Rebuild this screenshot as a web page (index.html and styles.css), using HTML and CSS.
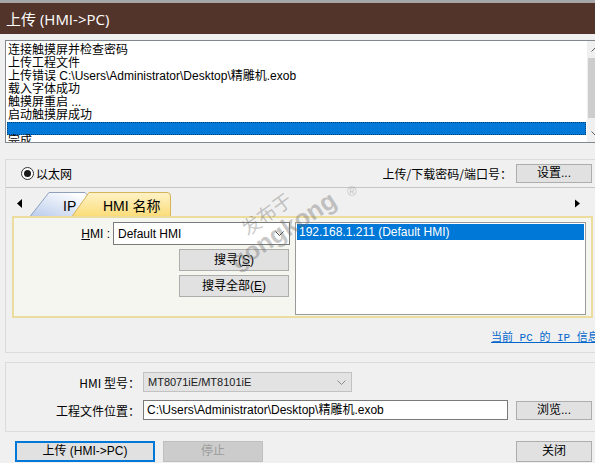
FILE: index.html
```html
<!DOCTYPE html>
<html lang="zh">
<head>
<meta charset="utf-8">
<title>上传 (HMI->PC)</title>
<link rel="stylesheet" href="styles.css">
</head>
<body>
<div class="titlebar"><span>上传 (HMI-&gt;PC)</span></div>
<div class="content">
  <div class="log">
    <div class="log-lines">
      <div class="line">连接触摸屏并检查密码</div>
      <div class="line">上传工程文件</div>
      <div class="line">上传错误 C:\Users\Administrator\Desktop\精雕机.exob</div>
      <div class="line">载入字体成功</div>
      <div class="line">触摸屏重启 ...</div>
      <div class="line">启动触摸屏成功</div>
      <div class="line sel"></div>
      <div class="line">完成</div>
    </div>
    <div class="vscroll">
      <div class="sb-btn"><svg width="9" height="5" viewBox="0 0 9 5"><polyline points="0.5,4.5 4.5,0.5 8.5,4.5" fill="none" stroke="#606060" stroke-width="1"/></svg></div>
      <div class="sb-thumb"></div>
      <div class="sb-track"></div>
      <div class="sb-btn"><svg width="9" height="5" viewBox="0 0 9 5"><polyline points="0.5,0.5 4.5,4.5 8.5,0.5" fill="none" stroke="#606060" stroke-width="1"/></svg></div>
    </div>
  </div>

  <div class="group g1">
    <div class="conn-row">
      <label class="radio"><span class="radio-ring"><span class="radio-dot"></span></span>以太网</label>
      <div class="pw">
        <span class="pw-label">上传/下载密码/端口号：</span>
        <button class="btn btn-76">设置...</button>
      </div>
    </div>
    <div class="tabstrip">
      <svg class="tabs" width="170" height="28" viewBox="0 0 170 28">
        <defs>
          <linearGradient id="ipg" x1="0" y1="1" x2="0.8" y2="0">
            <stop offset="0" stop-color="#b9cbeb"/>
            <stop offset="1" stop-color="#ffffff"/>
          </linearGradient>
          <linearGradient id="hmig" x1="0" y1="0" x2="0" y2="1">
            <stop offset="0" stop-color="#fff3c8"/>
            <stop offset="1" stop-color="#fadc78"/>
          </linearGradient>
        </defs>
        <polygon points="16,11 16,20 11,15.5" fill="#000"/>
        <polygon points="24,28.5 43,4.5 79,4.5 81,6.5 81,28.5" fill="url(#ipg)" stroke="#8f9fbc" stroke-width="1"/>
        <text x="57" y="23" class="tab-text">IP</text>
        <path d="M66,28.5 L83,4.5 L161,4.5 Q164.5,4.5 164.5,8 L164.5,28.5" fill="url(#hmig)" stroke="#d6b45a" stroke-width="1"/>
        <text x="97" y="23" class="tab-text">HMI 名称</text>
      </svg>
      <svg class="arrow-r" width="6" height="28" viewBox="0 0 6 28"><polygon points="0,11.5 0,19.5 5,15.5" fill="#000"/></svg>
    </div>
    <div class="panel">
      <div class="panel-left">
        <div class="hmi-field">
          <span class="hmi-label"><u>H</u>MI :</span>
          <div class="combo">
            <span>Default HMI</span>
            <svg width="9" height="5" viewBox="0 0 9 5"><polyline points="0.5,0.5 4.5,4.5 8.5,0.5" fill="none" stroke="#404040" stroke-width="1"/></svg>
          </div>
        </div>
        <button class="btn btn-search">搜寻(<u>S</u>)</button>
        <button class="btn btn-search">搜寻全部(<u>E</u>)</button>
      </div>
      <div class="hmi-list">
        <div class="hmi-sel">192.168.1.211 (Default HMI)</div>
      </div>
    </div>
    <div class="link-row"><a class="ip-link" href="#">当前 PC 的 IP 信息</a></div>
  </div>

  <div class="group g2">
    <div class="form-row">
      <span class="form-label">HMI 型号：</span>
      <div class="combo combo-dis">
        <span>MT8071iE/MT8101iE</span>
        <svg width="9" height="5" viewBox="0 0 9 5"><polyline points="0.5,0.5 4.5,4.5 8.5,0.5" fill="none" stroke="#8a8a8a" stroke-width="1"/></svg>
      </div>
    </div>
    <div class="form-row">
      <span class="form-label">工程文件位置：</span>
      <div class="text-input">C:\Users\Administrator\Desktop\精雕机.exob</div>
      <button class="btn btn-76 btn-browse">浏览...</button>
    </div>
  </div>

  <div class="actions">
    <button class="btn btn-upload">上传 (HMI-&gt;PC)</button>
    <button class="btn btn-stop" disabled>停止</button>
    <button class="btn btn-76 btn-close">关闭</button>
  </div>

  <div class="watermark">
    <span class="wm-cn">发布于</span>
    <span class="wm-en">gongkong</span>
    <span class="wm-r">®</span>
  </div>
</div>
</body>
</html>
```

FILE: styles.css
```css
* { box-sizing: border-box; }
html, body {
  margin: 0;
  padding: 0;
}
body {
  width: 595px;
  height: 463px;
  overflow: hidden;
  background: #f0f0f0;
  font-family: "Liberation Sans", "Noto Sans CJK SC", sans-serif;
  font-size: 12px;
  color: #000;
  position: relative;
}

.titlebar {
  height: 34px;
  border-top: 3px solid #a6a6a6;
  background: #53342a;
  color: #fff;
  font-family: "Open Sans", "Noto Sans CJK SC", sans-serif;
  font-size: 15px;
  padding-left: 6px;
  display: flex;
  align-items: center;
}

.content {
  width: 605px;
  padding-left: 5px;
}

/* log list */
.log {
  margin-top: 6px;
  width: 600px;
  height: 103px;
  border: 1px solid #828790;
  background: #fff;
  display: flex;
  overflow: hidden;
}
.log-lines {
  flex: 1;
  padding: 3px 1px 0 1px;
  font-family: "Liberation Sans", "Noto Sans CJK SC", sans-serif;
  font-size: 12px;
  line-height: 13px;
  overflow: hidden;
}
.line {
  height: 13px;
  padding-left: 1px;
  white-space: nowrap;
}
.line.sel {
  background: #0078d7;
  outline: 1px dotted rgba(0, 0, 0, 0.45);
  outline-offset: -1px;
}
.vscroll {
  width: 17px;
  background: #f0f0f0;
  display: flex;
  flex-direction: column;
}
.sb-btn {
  height: 17px;
  display: flex;
  align-items: center;
  justify-content: center;
}
.sb-thumb {
  height: 60px;
  margin: 0 1px;
  background: #cdcdcd;
}
.sb-track { flex: 1; }

/* group boxes */
.group {
  width: 600px;
  border: 1px solid #dcdcdc;
}
.g1 { margin-top: 16px; }
.g2 {
  margin-top: 9px;
  padding: 9px 0 11px 0;
  display: flex;
  flex-direction: column;
  gap: 8px;
}

.conn-row {
  height: 27px;
  display: flex;
  align-items: center;
  justify-content: space-between;
  padding: 0 12px 0 15px;
}
.radio {
  display: flex;
  align-items: center;
  gap: 2px;
  font-family: "Noto Sans CJK SC", sans-serif;
  font-size: 12px;
}
.radio-ring {
  width: 13px;
  height: 13px;
  border: 1px solid #333;
  border-radius: 50%;
  background: #fff;
  display: flex;
  align-items: center;
  justify-content: center;
}
.radio-dot {
  width: 7px;
  height: 7px;
  border-radius: 50%;
  background: #1a1a1a;
}
.pw {
  display: flex;
  align-items: center;
}
.pw-label {
  font-family: "Noto Sans CJK SC", sans-serif;
  margin-right: 4px;
}

.btn {
  font-family: "Liberation Sans", "Noto Sans CJK SC", sans-serif;
  font-size: 12px;
  color: #000;
  background: #e1e1e1;
  border: 1px solid #adadad;
  padding: 0;
  margin: 0;
  height: 19px;
  line-height: 17px;
  display: flex;
  align-items: center;
  justify-content: center;
}
.btn-76 { width: 76px; }

/* tabs */
.tabstrip {
  height: 29px;
  border-top: 1px solid #c6c6c6;
  display: flex;
  justify-content: space-between;
  align-items: flex-start;
}
.tabs { display: block; }
.tab-text {
  font-family: "Liberation Sans", "Noto Sans CJK SC", sans-serif;
  font-size: 14px;
  fill: #000;
}
.arrow-r {
  display: block;
  margin-right: 23px;
}

.panel {
  margin-left: 6px;
  width: 581px;
  height: 102px;
  border: 2px solid #ecdc9e;
  background: #f6f6f1;
  display: flex;
}
.panel-left {
  width: 281px;
  padding-top: 4px;
  display: flex;
  flex-direction: column;
  align-items: flex-end;
  gap: 4px;
}
.hmi-field {
  display: flex;
  align-items: center;
  padding-right: 5px;
}
.hmi-label {
  margin-right: 3px;
  font-size: 12px;
}
.combo {
  height: 23px;
  width: 177px;
  background: #fff;
  border: 1px solid #7a7a7a;
  display: flex;
  align-items: center;
  justify-content: space-between;
  padding: 0 5px 0 4px;
  font-size: 12px;
}
.btn-search {
  width: 110px;
  height: 22px;
  margin-right: 6px;
}
.hmi-list {
  margin: 4px 0 0 0;
  width: 291px;
  height: 93px;
  border: 1px solid #9a9a9a;
  background: #fff;
  padding: 1px;
}
.hmi-sel {
  height: 16px;
  background: #0078d7;
  color: #fff;
  font-size: 12px;
  line-height: 16px;
  padding-left: 2px;
  white-space: nowrap;
}

.link-row {
  height: 34px;
  display: flex;
  align-items: center;
  padding-left: 485px;
  padding-top: 1px;
}
.ip-link {
  font-family: "Liberation Mono", "Noto Sans CJK SC", monospace;
  font-size: 11px;
  color: #0066cc;
  text-decoration: underline;
  white-space: nowrap;
}

/* bottom form */
.form-row {
  display: flex;
  align-items: center;
  height: 20px;
}
.form-label {
  width: 134px;
  text-align: right;
  margin-right: 3px;
  font-family: "Noto Sans CJK SC", sans-serif;
  font-size: 12px;
  white-space: nowrap;
}
.combo-dis {
  width: 209px;
  height: 20px;
  background: #e3e3e3;
  border-color: #c2c2c2;
  color: #202020;
  font-size: 11px;
}
.text-input {
  width: 365px;
  height: 20px;
  background: #fff;
  border: 1px solid #7a7a7a;
  padding-left: 3px;
  font-size: 12px;
  line-height: 18px;
  white-space: nowrap;
}
.btn-browse { margin-left: 8px; }

.actions {
  margin-top: 9px;
  display: flex;
  padding: 0 13px 0 10px;
}
.btn-upload {
  width: 140px;
  height: 21px;
  border: 2px solid #0078d7;
}
.btn-stop {
  width: 100px;
  height: 21px;
  margin-left: 8px;
  background: #cccccc;
  border-color: #bfbfbf;
  color: #9c9c9c;
}
.btn-close {
  height: 21px;
  margin-left: auto;
}

/* watermark overlay */
.watermark {
  position: absolute;
  left: 0;
  top: 0;
  width: 0;
  height: 0;
  pointer-events: none;
}
.watermark span {
  position: absolute;
  white-space: nowrap;
  color: rgba(110, 110, 110, 0.38);
  transform-origin: left center;
}
.wm-cn {
  left: 243px;
  top: 220px;
  font-family: "Noto Sans CJK SC", sans-serif;
  font-size: 19px;
  line-height: 20px;
  transform: rotate(-36deg);
}
.wm-en {
  left: 232px;
  top: 250px;
  font-family: "Liberation Sans", sans-serif;
  font-weight: bold;
  font-size: 25px;
  line-height: 26px;
  transform: rotate(-33deg);
}
.wm-r {
  left: 347px;
  top: 185px;
  font-family: "Liberation Sans", sans-serif;
  font-size: 13px;
  line-height: 14px;
}
```
